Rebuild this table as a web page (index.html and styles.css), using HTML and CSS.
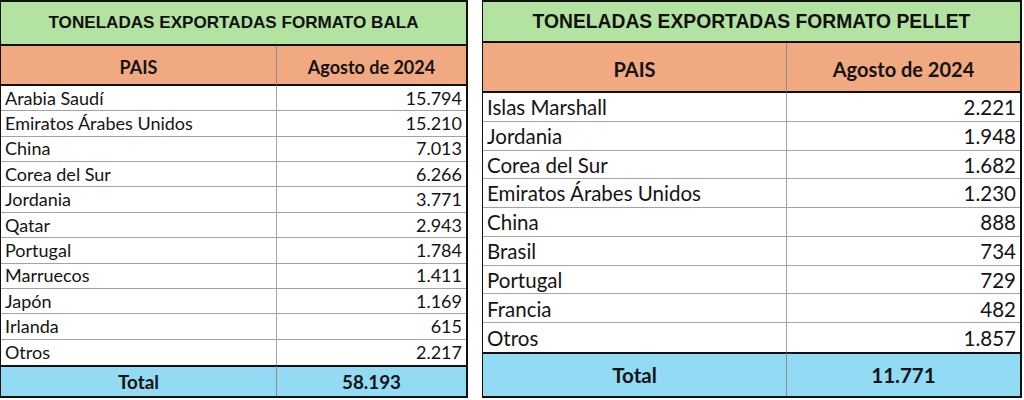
FILE: index.html
```html
<!DOCTYPE html>
<html lang="es">
<head>
<meta charset="utf-8">
<title>Toneladas exportadas</title>
<link rel="stylesheet" href="styles.css">
</head>
<body>
<div class="page">
  <div class="sheet sheet-bala">
    <div class="cell title">TONELADAS EXPORTADAS FORMATO BALA</div>
    <div class="cell head">PAIS</div>
    <div class="cell head">Agosto de 2024</div>
    <div class="cell name">Arabia Saudí</div><div class="cell num">15.794</div>
    <div class="cell name">Emiratos Árabes Unidos</div><div class="cell num">15.210</div>
    <div class="cell name">China</div><div class="cell num">7.013</div>
    <div class="cell name">Corea del Sur</div><div class="cell num">6.266</div>
    <div class="cell name">Jordania</div><div class="cell num">3.771</div>
    <div class="cell name">Qatar</div><div class="cell num">2.943</div>
    <div class="cell name">Portugal</div><div class="cell num">1.784</div>
    <div class="cell name">Marruecos</div><div class="cell num">1.411</div>
    <div class="cell name">Japón</div><div class="cell num">1.169</div>
    <div class="cell name">Irlanda</div><div class="cell num">615</div>
    <div class="cell name last">Otros</div><div class="cell num last">2.217</div>
    <div class="cell total">Total</div>
    <div class="cell total">58.193</div>
  </div>

  <div class="sheet sheet-pellet">
    <div class="cell title">TONELADAS EXPORTADAS FORMATO PELLET</div>
    <div class="cell head">PAIS</div>
    <div class="cell head">Agosto de 2024</div>
    <div class="cell name">Islas Marshall</div><div class="cell num">2.221</div>
    <div class="cell name">Jordania</div><div class="cell num">1.948</div>
    <div class="cell name">Corea del Sur</div><div class="cell num">1.682</div>
    <div class="cell name">Emiratos Árabes Unidos</div><div class="cell num">1.230</div>
    <div class="cell name">China</div><div class="cell num">888</div>
    <div class="cell name">Brasil</div><div class="cell num">734</div>
    <div class="cell name">Portugal</div><div class="cell num">729</div>
    <div class="cell name">Francia</div><div class="cell num">482</div>
    <div class="cell name last">Otros</div><div class="cell num last">1.857</div>
    <div class="cell total">Total</div>
    <div class="cell total">11.771</div>
  </div>
</div>
</body>
</html>
```

FILE: styles.css
```css
* { box-sizing: border-box; }

body {
  margin: 0;
  background: #ffffff;
}

.page {
  display: flex;
  align-items: flex-start;
  gap: 14px;
}

.sheet {
  display: grid;
  height: 398px;
  border: 2px solid #111;
  border-left-width: 1px;
  font-family: Lato, "Open Sans", sans-serif;
  color: #141414;
}

.sheet-bala {
  width: 468px;
  grid-template-columns: 275px 1fr;
  grid-template-rows: 44px 40px repeat(11, 25.36px) 31px;
  font-size: 18px;
}

.sheet-pellet {
  width: 540px;
  grid-template-columns: 303px 1fr;
  grid-template-rows: 41px 50px repeat(9, 28.78px) 44px;
  font-size: 20.5px;
}

.cell {
  display: flex;
  min-width: 0;
  white-space: nowrap;
}

.title {
  grid-column: 1 / -1;
  align-items: center;
  justify-content: center;
  background: #b3e3a0;
  border-bottom: 2px solid #111;
  font-family: "Liberation Sans", Arial, sans-serif;
  font-weight: 700;
  font-size: 17.1px;
  color: #111;
}

.sheet-pellet .title {
  font-size: 19.3px;
}

.head {
  align-items: center;
  justify-content: center;
  padding-top: 3px;
  background: #f1a982;
  border-bottom: 2px solid #111;
  font-weight: 700;
}

.sheet-pellet .head {
  font-size: 20px;
}

.head + .head {
  border-left: 1px solid #8c8c8c;
}

.name,
.num {
  align-items: flex-end;
  padding: 0 4px 1px 4px;
  border-bottom: 1px solid #a3a3a3;
  line-height: 1.2;
}

.num {
  justify-content: flex-end;
  border-left: 1px solid #a3a3a3;
}

.last {
  border-bottom: 0;
}

.total {
  align-items: center;
  justify-content: center;
  background: #93daf5;
  border-top: 2px solid #111;
  font-weight: 700;
}

.sheet-bala .total {
  font-size: 18.8px;
}

.total + .total {
  border-left: 1px solid #8c8c8c;
}
```
